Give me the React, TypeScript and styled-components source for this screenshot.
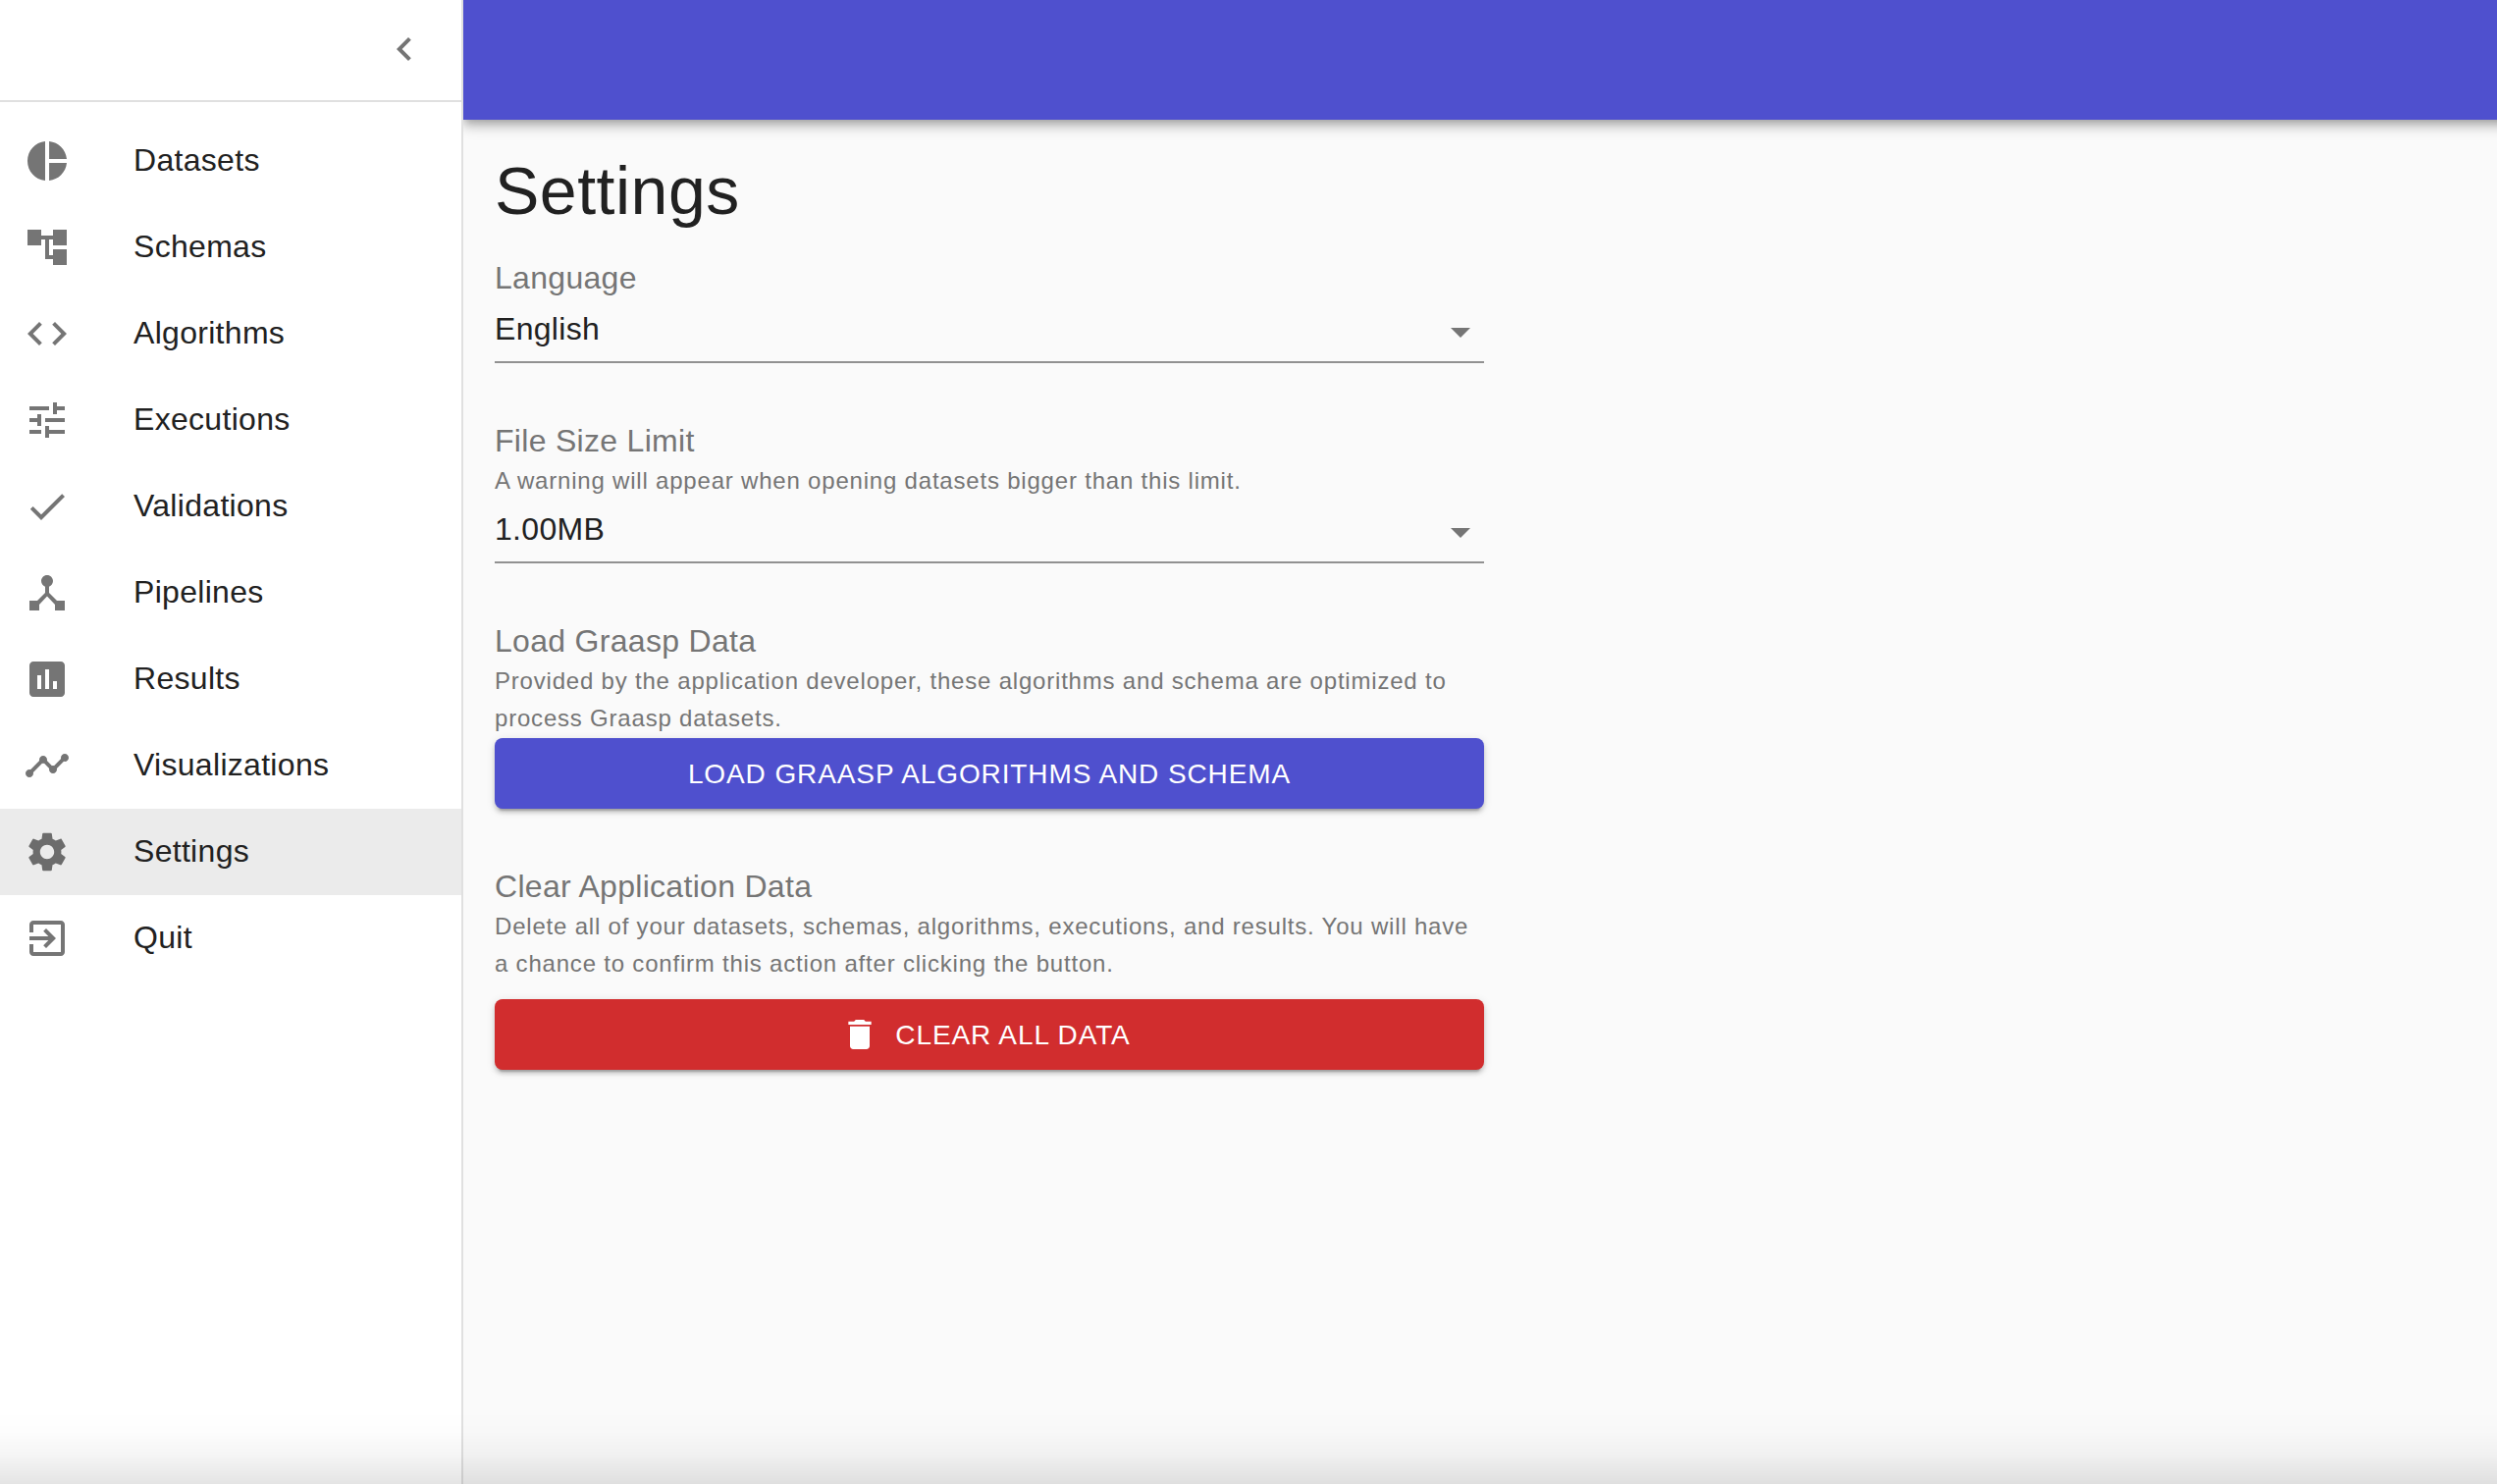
import React from "react";
import styled, { createGlobalStyle } from "styled-components";

const GlobalStyle = createGlobalStyle`
  *, *::before, *::after { box-sizing: border-box; }
  body {
    margin: 0;
    background: #fafafa;
    color: #212121;
    font-family: "Liberation Sans", Helvetica, Arial, sans-serif;
    font-size: 32px;
    letter-spacing: 0.3px;
  }
`;

const Layout = styled.div`
  display: flex;
  height: 1512px;
  overflow: hidden;
`;

const Drawer = styled.nav`
  flex: none;
  z-index: 2;
  width: 472px;
  background: #fff;
  border-right: 2px solid #e0e0e0;
`;

const DrawerHeader = styled.div`
  display: flex;
  justify-content: flex-end;
  height: 104px;
  padding: 2px 10px 0 0;
  border-bottom: 2px solid #e0e0e0;
`;

const IconButton = styled.button`
  display: flex;
  width: 96px;
  height: 96px;
  padding: 24px;
  border: 0;
  background: none;
  color: #757575;
`;

const Icon = styled.svg<{ $size?: number }>`
  flex: none;
  display: block;
  width: ${(p) => p.$size ?? 48}px;
  height: ${(p) => p.$size ?? 48}px;
  fill: currentColor;
`;

const Menu = styled.ul`
  margin: 0;
  padding: 16px 0;
  list-style: none;
`;

const MenuItem = styled.li<{ $selected?: boolean }>`
  display: flex;
  align-items: center;
  height: 88px;
  padding: 0 24px;
  background: ${(p) => (p.$selected ? "#ebebeb" : "transparent")};
`;

const MenuIcon = styled.span<{ $selected?: boolean }>`
  width: 112px;
  color: ${(p) => (p.$selected ? "#6c6c6c" : "#757575")};
`;

const MenuText = styled.span`
  line-height: 48px;
  padding-bottom: 2px;
`;

const Page = styled.div`
  flex: 1;
  min-width: 0;
`;

const AppBar = styled.header`
  height: 122px;
  margin-right: -24px;
  background: #4f50ce;
  box-shadow: 0 4px 8px -2px rgba(0, 0, 0, 0.2), 0 8px 10px 0 rgba(0, 0, 0, 0.14),
    0 2px 20px 0 rgba(0, 0, 0, 0.12);
`;

const Content = styled.main`
  display: flex;
  flex-direction: column;
  width: 1072px;
  padding: 30px 32px 0;
`;

const Title = styled.h1`
  margin: 0 0 27px;
  font-size: 68px;
  font-weight: 400;
  line-height: 84px;
  letter-spacing: 0.5px;
`;

const Groups = styled.div`
  display: flex;
  flex-direction: column;
  gap: 59px;
`;

const Group = styled.section`
  display: flex;
  flex-direction: column;
`;

const Label = styled.label`
  margin-bottom: 2px;
  line-height: 40px;
  color: #757575;
`;

const Caption = styled.p`
  margin: 0;
  font-size: 24px;
  line-height: 38px;
  letter-spacing: 0.8px;
  color: #757575;
`;

const SelectBox = styled.div`
  display: flex;
  align-items: flex-start;
  justify-content: space-between;
  height: 65px;
  padding-top: 9px;
  border-bottom: 2px solid #919191;
`;

const SelectValue = styled.span`
  margin-top: 1px;
  line-height: 40px;
`;

const Arrow = styled(Icon)`
  color: #757575;
`;

const Button = styled.button<{ $color: string; $gap: number }>`
  display: flex;
  align-items: center;
  justify-content: center;
  height: 72px;
  margin-top: ${(p) => p.$gap}px;
  padding: 0 32px;
  border: 0;
  border-radius: 8px;
  background: ${(p) => p.$color};
  color: #fff;
  font-family: inherit;
  font-size: 28px;
  line-height: 48px;
  letter-spacing: 0.9px;
  text-transform: uppercase;
  box-shadow: 0 6px 2px -4px rgba(0, 0, 0, 0.2), 0 4px 4px 0 rgba(0, 0, 0, 0.14),
    0 2px 10px 0 rgba(0, 0, 0, 0.12);
`;

const ButtonText = styled.span`
  padding-top: 1px;
`;

const StartIcon = styled.span`
  display: flex;
  margin: 0 16px 0 -8px;
`;

const BottomShade = styled.div`
  position: fixed;
  z-index: 3;
  left: 0;
  right: 0;
  bottom: 0;
  height: 76px;
  pointer-events: none;
  background: linear-gradient(
    to bottom,
    rgba(0, 0, 0, 0) 0%,
    rgba(0, 0, 0, 0.008) 30%,
    rgba(0, 0, 0, 0.04) 62%,
    rgba(0, 0, 0, 0.105) 100%
  );
`;

const paths = {
  chevron: "M15.41 7.41L14 6l-6 6 6 6 1.41-1.41L10.83 12z",
  arrow: "M7 10l5 5 5-5z",
  trash: "M6 19c0 1.1.9 2 2 2h8c1.1 0 2-.9 2-2V7H6v12zM19 4h-3.5l-1-1h-5l-1 1H5v2h14V4z",
};

const items = [
  {
    text: "Datasets",
    d: "M11 2v20c-5.07-.5-9-4.79-9-10s3.93-9.5 9-10zm2.03 0v8.99H22c-.47-4.74-4.24-8.52-8.97-8.99zm0 11.01V22c4.74-.47 8.5-4.25 8.97-8.99h-8.97z",
  },
  { text: "Schemas", d: "M22 11V3h-7v3H9V3H2v8h7V8h2v10h4v3h7v-8h-7v3h-2V8h2v3z" },
  {
    text: "Algorithms",
    d: "M9.4 16.6L4.8 12l4.6-4.6L8 6l-6 6 6 6 1.4-1.4zm5.2 0l4.6-4.6-4.6-4.6L16 6l6 6-6 6-1.4-1.4z",
  },
  {
    text: "Executions",
    d: "M3 17v2h6v-2H3zM3 5v2h10V5H3zm10 16v-2h8v-2h-8v-2h-2v6h2zM7 9v2H3v2h4v2h2V9H7zm14 4v-2H11v2h10zm-6-4h2V7h4V5h-4V3h-2v6z",
  },
  { text: "Validations", d: "M9 16.17L4.83 12l-1.42 1.41L9 19 21 7l-1.41-1.41z" },
  {
    text: "Pipelines",
    d: "M17 16l-4-4V8.82C14.16 8.4 15 7.3 15 6c0-1.66-1.34-3-3-3S9 4.34 9 6c0 1.3.84 2.4 2 2.82V12l-4 4H3v5h5v-3.05l4-4.2 4 4.2V21h5v-5h-4z",
  },
  {
    text: "Results",
    d: "M19 3H5c-1.1 0-2 .9-2 2v14c0 1.1.9 2 2 2h14c1.1 0 2-.9 2-2V5c0-1.1-.9-2-2-2zM9 17H7v-7h2v7zm4 0h-2V7h2v10zm4 0h-2v-4h2v4z",
  },
  {
    text: "Visualizations",
    d: "M23 8c0 1.1-.9 2-2 2-.18 0-.35-.02-.51-.07l-3.56 3.55c.05.16.07.34.07.52 0 1.1-.9 2-2 2s-2-.9-2-2c0-.18.02-.36.07-.52l-2.55-2.55c-.16.05-.34.07-.52.07s-.36-.02-.52-.07l-4.55 4.56c.05.16.07.33.07.51 0 1.1-.9 2-2 2s-2-.9-2-2 .9-2 2-2c.18 0 .35.02.51.07l4.56-4.55C8.02 9.36 8 9.18 8 9c0-1.1.9-2 2-2s2 .9 2 2c0 .18-.02.36-.07.52l2.55 2.55c.16-.05.34-.07.52-.07s.36.02.52.07l3.55-3.56C19.02 8.35 19 8.18 19 8c0-1.1.9-2 2-2s2 .9 2 2z",
  },
  {
    text: "Settings",
    selected: true,
    d: "M19.14 12.94c.04-.3.06-.61.06-.94 0-.32-.02-.64-.07-.94l2.03-1.58c.18-.14.23-.41.12-.61l-1.92-3.32c-.12-.22-.37-.29-.59-.22l-2.39.96c-.5-.38-1.03-.7-1.62-.94l-.36-2.54c-.04-.24-.24-.41-.48-.41h-3.84c-.24 0-.43.17-.47.41l-.36 2.54c-.59.24-1.13.57-1.62.94l-2.39-.96c-.22-.08-.47 0-.59.22L2.74 8.87c-.12.21-.08.47.12.61l2.03 1.58c-.05.3-.09.63-.09.94s.02.64.07.94l-2.03 1.58c-.18.14-.23.41-.12.61l1.92 3.32c.12.22.37.29.59.22l2.39-.96c.5.38 1.03.7 1.62.94l.36 2.54c.05.24.24.41.48.41h3.84c.24 0 .44-.17.47-.41l.36-2.54c.59-.24 1.13-.56 1.62-.94l2.39.96c.22.08.47 0 .59-.22l1.92-3.32c.12-.22.07-.47-.12-.61l-2.01-1.58zM12 15.6c-1.98 0-3.6-1.62-3.6-3.6s1.62-3.6 3.6-3.6 3.6 1.62 3.6 3.6-1.62 3.6-3.6 3.6z",
  },
  {
    text: "Quit",
    d: "M10.09 15.59L11.5 17l5-5-5-5-1.41 1.41L12.67 11H3v2h9.67l-2.58 2.59zM19 3H5c-1.11 0-2 .9-2 2v4h2V5h14v14H5v-4H3v4c0 1.1.89 2 2 2h14c1.1 0 2-.9 2-2V5c0-1.1-.9-2-2-2z",
  },
];

function Select({ value }: { value: string }) {
  return (
    <SelectBox>
      <SelectValue>{value}</SelectValue>
      <Arrow viewBox="0 0 24 24">
        <path d={paths.arrow} />
      </Arrow>
    </SelectBox>
  );
}

export default function App() {
  return (
    <>
      <GlobalStyle />
      <Layout>
        <Drawer>
          <DrawerHeader>
            <IconButton aria-label="Close menu">
              <Icon viewBox="0 0 24 24">
                <path d={paths.chevron} />
              </Icon>
            </IconButton>
          </DrawerHeader>
          <Menu>
            {items.map((item) => (
              <MenuItem key={item.text} $selected={item.selected}>
                <MenuIcon $selected={item.selected}>
                  <Icon viewBox="0 0 24 24">
                    <path d={item.d} />
                  </Icon>
                </MenuIcon>
                <MenuText>{item.text}</MenuText>
              </MenuItem>
            ))}
          </Menu>
        </Drawer>
        <Page>
          <AppBar />
          <Content>
            <Title>Settings</Title>
            <Groups>
              <Group>
                <Label>Language</Label>
                <Select value="English" />
              </Group>
              <Group>
                <Label>File Size Limit</Label>
                <Caption>A warning will appear when opening datasets bigger than this limit.</Caption>
                <Select value="1.00MB" />
              </Group>
              <Group>
                <Label>Load Graasp Data</Label>
                <Caption>
                  Provided by the application developer, these algorithms and schema are optimized to
                  process Graasp datasets.
                </Caption>
                <Button $color="#4f50ce" $gap={1}>
                  <ButtonText>Load Graasp Algorithms and Schema</ButtonText>
                </Button>
              </Group>
              <Group>
                <Label>Clear Application Data</Label>
                <Caption>
                  Delete all of your datasets, schemas, algorithms, executions, and results. You will have a
                  chance to confirm this action after clicking the button.
                </Caption>
                <Button $color="#d12d2e" $gap={17}>
                  <StartIcon>
                    <Icon $size={40} viewBox="0 0 24 24">
                      <path d={paths.trash} />
                    </Icon>
                  </StartIcon>
                  <ButtonText>Clear all data</ButtonText>
                </Button>
              </Group>
            </Groups>
          </Content>
        </Page>
      </Layout>
      <BottomShade />
    </>
  );
}
